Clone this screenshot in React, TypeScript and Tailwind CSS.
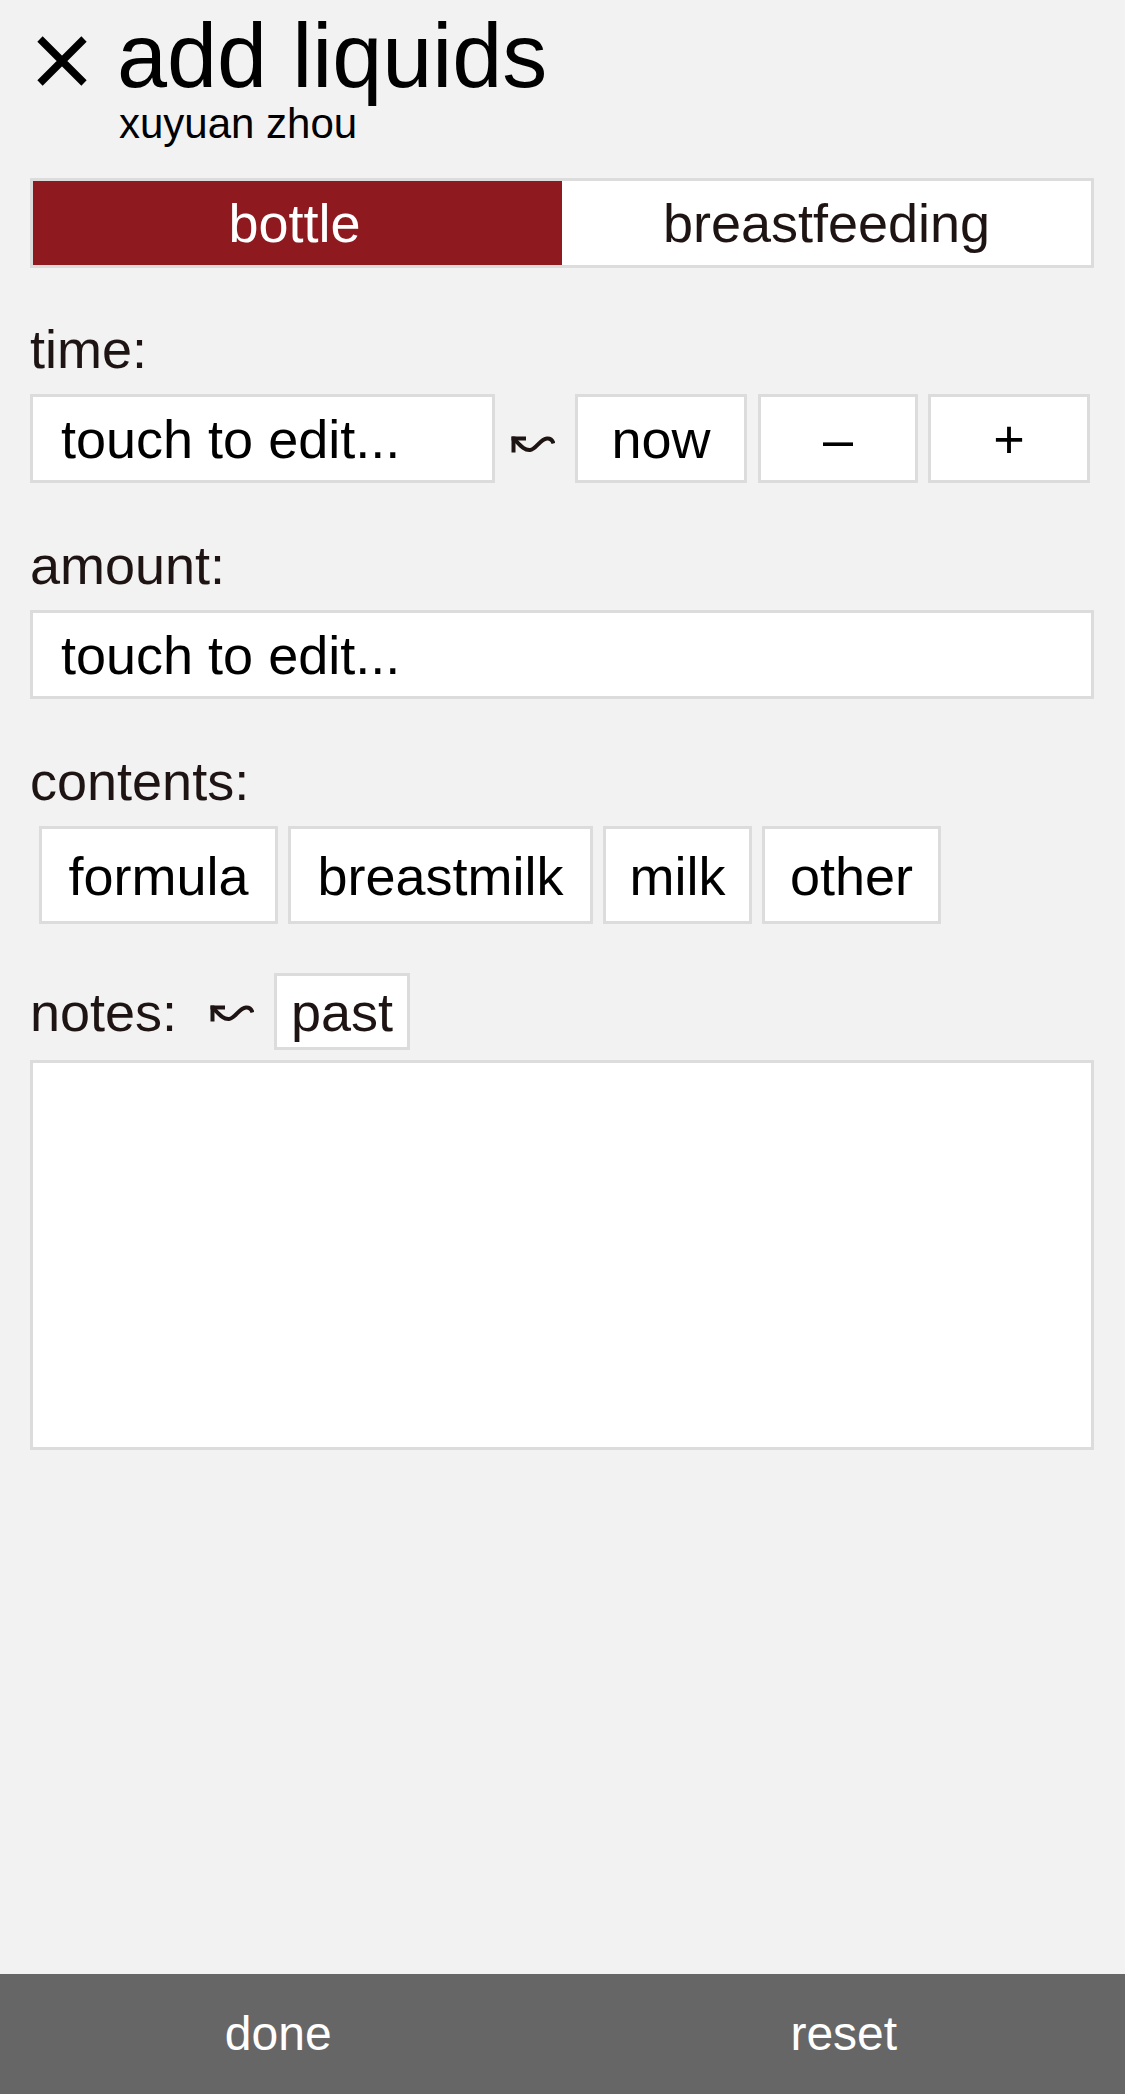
import React from "react";

function WaveArrow({ className }: { className?: string }) {
  return (
    <svg
      viewBox="0 0 44 17"
      width={44}
      height={17}
      className={className}
      fill="none"
      stroke="#1f1414"
      strokeWidth={4}
    >
      <path d="M2.5 2.5 H13" strokeLinecap="square" />
      <path d="M2.5 2.5 V14.5" strokeLinecap="square" />
      <path d="M3 3 C 9 9, 13 14.5, 19 14 C 25 13.5, 29 3, 36 2.5 C 39.5 2.3, 41.5 4, 42.5 7.5" />
    </svg>
  );
}

function CloseIcon() {
  return (
    <svg viewBox="0 0 52 52" width={52} height={52} className="ml-[6px] mt-[35px] shrink-0">
      <path d="M4 4 L48 48 M48 4 L4 48" stroke="#000" strokeWidth={7.5} />
    </svg>
  );
}

const boxCls =
  "bg-white border-[3px] border-[#dcdcdc] h-[89px] flex items-center text-[54px] leading-none text-black";

export default function App() {
  const contents = [
    { label: "formula", w: "w-[239px]" },
    { label: "breastmilk", w: "w-[305px]" },
    { label: "milk", w: "w-[149px]" },
    { label: "other", w: "w-[179px]" },
  ];

  return (
    <div className="min-h-[2094px] w-[1125px] bg-[#f2f2f2] flex flex-col font-['Liberation_Sans',Arial,sans-serif] text-[#1f1414]">
      <div className="pl-[30px] pr-[31px]">
        {/* header */}
        <div className="flex items-start">
          <CloseIcon />
          <div className="ml-[29px] pt-[11px]">
            <h1 className="text-[90px] leading-none text-black">add liquids</h1>
            <div className="mt-[2px] ml-[2px] text-[42px] leading-none text-black">xuyuan zhou</div>
          </div>
        </div>

        {/* mode tabs */}
        <div className="mt-[33px] h-[90px] border-[3px] border-[#dcdcdc] grid grid-cols-2 text-[54px] leading-none">
          <div className="bg-[#8e1a1f] text-white flex items-center justify-center pr-[6px]">bottle</div>
          <div className="bg-white flex items-center justify-center">breastfeeding</div>
        </div>

        {/* time */}
        <div className="mt-[54px] text-[54px] leading-none">time:</div>
        <div className="mt-[18px] flex items-center">
          <div className={`${boxCls} w-[465px] pl-[28px]`}>touch to edit...</div>
          <WaveArrow className="ml-[16px] mt-[12px]" />
          <div className={`${boxCls} w-[172px] ml-[20px] justify-center`}>now</div>
          <div className={`${boxCls} w-[160px] ml-[11px] justify-center`}>–</div>
          <div className={`${boxCls} w-[162px] ml-[10px] justify-center`}>+</div>
        </div>

        {/* amount */}
        <div className="mt-[55px] text-[54px] leading-none">amount:</div>
        <div className={`${boxCls} mt-[18px] pl-[28px]`}>touch to edit...</div>

        {/* contents */}
        <div className="mt-[55px] text-[54px] leading-none">contents:</div>
        <div className="mt-[18px] ml-[9px] flex gap-[10px]">
          {contents.map((c) => (
            <div
              key={c.label}
              className={`${c.w} h-[98px] bg-white border-[3px] border-[#dcdcdc] flex items-center justify-center text-[54px] leading-none text-black pt-[2px]`}
            >
              {c.label}
            </div>
          ))}
        </div>

        {/* notes */}
        <div className="mt-[49px] h-[77px] flex items-center">
          <div className="text-[54px] leading-none w-[180px]">notes:</div>
          <WaveArrow className="mt-[4px]" />
          <div className="ml-[20px] h-[77px] w-[136px] bg-white border-[3px] border-[#dcdcdc] flex items-center justify-center text-[54px] leading-none">
            past
          </div>
        </div>
        <textarea className="mt-[10px] block w-full h-[390px] bg-white border-[3px] border-[#dcdcdc] resize-none outline-none" />
      </div>

      {/* footer */}
      <div className="mt-auto h-[120px] bg-[#666666] grid grid-cols-2 text-white text-[48px] leading-none">
        <div className="flex items-center justify-center pr-[6px]">done</div>
        <div className="flex items-center justify-center">reset</div>
      </div>
    </div>
  );
}
